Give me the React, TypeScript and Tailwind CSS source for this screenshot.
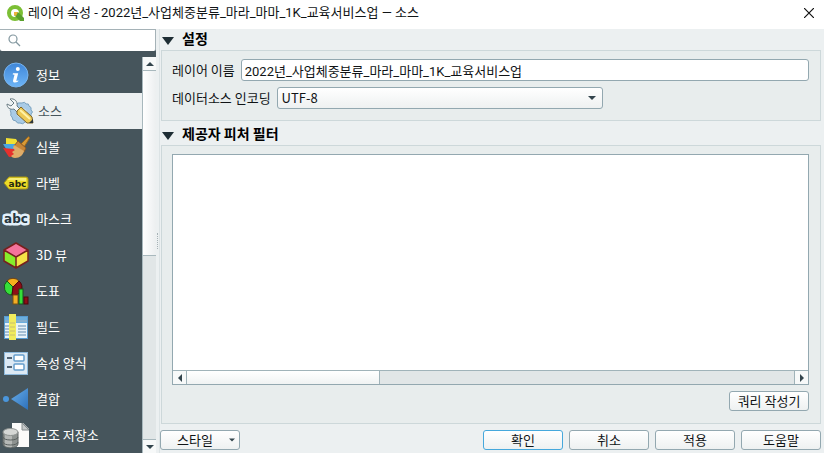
import { useState, type ReactNode } from "react";

const svgBox = "size-7 shrink-0";

const InfoIcon = () => (
  <svg viewBox="0 0 28 28" className={svgBox}>
    <defs>
      <linearGradient id="info" x1="0" y1="0" x2="0" y2="1">
        <stop offset="0" stopColor="#3f86d8" />
        <stop offset="1" stopColor="#6db5f7" />
      </linearGradient>
    </defs>
    <circle cx="14" cy="14" r="12" fill="url(#info)" stroke="#78b4ee" strokeWidth="1" />
    <circle cx="15.8" cy="8" r="2" fill="#fff" />
    <path d="M11 12.2h5.2l-1.8 7c-.2 1 .6.8 2 .1l-.3 1.2c-2.500 1.600-5.700 1.500-5-1.300l1.400-5.400-1.800-.4z" fill="#fff" />
  </svg>
);

const SourceIcon = () => (
  <svg viewBox="0 0 28 28" className={svgBox}>
    <path d="M16 6q3-2 4 1 3-1 3 2 3 1 2 4 3 2 0 4 1 4-2 5 0 3-4 3-2 3-5 1-3 1-4-2-4 0-4-4-2-1-1-4-2-3 1-5 0-3 4-3 1-3 6-2z" fill="#a9cbe6" stroke="#7ba3c0" strokeWidth="1" />
    <circle cx="16" cy="16" r="5" fill="#dcebf5" />
    <path d="M4 2c4-1 8 2 7 7l8 8-3 3L8 12c-4 1-7-1-7-5l4 2 3-3z" fill="#f4f6f6" stroke="#687b83" strokeWidth="1" />
    <path d="M11 14l4-4 11 10 1 6-6 0-10-9z" fill="#edca55" stroke="#7d6428" strokeWidth="1" />
    <path d="M14 13l10 9" stroke="#fff3a8" strokeWidth="2" />
    <path d="M23 26l4-4v4z" fill="#2e383c" />
  </svg>
);

const BrushIcon = () => (
  <svg viewBox="0 0 28 28" className={svgBox}>
    <path d="M4 5l10 1 3 5-5 5-8-4z" fill="#f0df33" />
    <path d="M1 11l12 0 3 6-10 2z" fill="#49a6e2" />
    <path d="M1 15l11 1 4 7-9 1z" fill="#e5302d" />
    <path d="M19 11l7-7c1-1 2 1 1 2l-5 8z" fill="#d89a37" stroke="#a06a1c" strokeWidth="1" />
    <path d="M16 8l8 7-2 4-10-6z" fill="#c78638" stroke="#8d5822" strokeWidth="1" />
    <path d="M12 12l10 6c-1 4-4 7-9 7-2 0-3-1-4-2l3-2-2-2 3-2-2-2z" fill="#dfac68" />
  </svg>
);

const LabelIcon = () => (
  <svg viewBox="0 0 28 28" className={svgBox}>
    <path d="M2 14l5-6h17q2 0 2 2v8q0 2-2 2H7z" fill="#eddb27" stroke="#a79718" strokeWidth="1" />
    <path d="M5 11l3-2h16v3z" fill="#f7ee77" />
    <text x="15.500" y="17.500" textAnchor="middle" fontFamily="DejaVu Sans" fontWeight="bold" fontSize="9" fill="#252810">abc</text>
  </svg>
);

const MaskIcon = () => (
  <svg viewBox="0 0 28 28" className={svgBox}>
    <text x="14" y="18" textAnchor="middle" fontFamily="DejaVu Sans" fontWeight="bold" fontSize="12" fill="#27363e" stroke="#e3f0fa" strokeWidth="5" strokeLinejoin="round" paintOrder="stroke">abc</text>
  </svg>
);

const CubeIcon = () => (
  <svg viewBox="0 0 28 28" className={svgBox}>
    <path d="M14 2l12 7-12 7L2 9z" fill="#f5739b" />
    <path d="M2 9l12 7v11L2 20z" fill="#86ed2b" />
    <path d="M26 9l-12 7v11l12-7z" fill="#f5e246" />
    <path d="M14 2l12 7v11l-12 7-12-7V9zM2 9l12 7 12-7M14 16v11" fill="none" stroke="#77201d" strokeWidth="1.500" strokeLinejoin="round" />
  </svg>
);

const ChartIcon = () => (
  <svg viewBox="0 0 28 28" className={svgBox}>
    <path d="M11 10L5 4a8 8 0 0 1 12 0z" fill="#f6b01d" stroke="#704313" strokeWidth="1" />
    <path d="M11 10L5 4a8 8 0 0 0 5 14z" fill="#35df39" stroke="#16551c" strokeWidth="1" />
    <path d="M11 10l6-6a8 8 0 0 1-7 14z" fill="#8e0d17" stroke="#49090c" strokeWidth="1" />
    <rect x="11" y="18" width="5" height="9" fill="#f3ad26" stroke="#795211" strokeWidth="1" />
    <rect x="17" y="12" width="4" height="15" fill="#35df39" stroke="#16551c" strokeWidth="1" />
    <rect x="22" y="20" width="4" height="7" fill="#8e0d17" stroke="#49090c" strokeWidth="1" />
  </svg>
);

const FieldIcon = () => (
  <svg viewBox="0 0 28 28" className={svgBox}>
    <rect x="2.500" y="3.500" width="23" height="22" fill="#e8f2f8" stroke="#579bd0" />
    <path d="M3 4h22v6H3z" fill="#6baedd" />
    <path d="M3 8h22M16 13h8M16 16h8M16 19h8M16 22h8M3 13h4M3 16h4M3 19h4M3 22h4" stroke="#8faec7" strokeWidth="1.500" />
    <rect x="7" y="1" width="7" height="26" fill="#f1ec5d" />
    <path d="M8 10h5M8 14h5M8 18h5M8 22h5" stroke="#d6ce69" strokeWidth="1.500" />
  </svg>
);

const FormIcon = () => (
  <svg viewBox="0 0 28 28" className={svgBox}>
    <rect x="2.500" y="3.500" width="23" height="22" fill="#dce9f4" stroke="#8db9dc" />
    <path d="M5 9h5M5 18h5" stroke="#536575" strokeWidth="2" />
    <rect x="12" y="6" width="10" height="6" rx="1" fill="#fff" stroke="#649dcc" strokeWidth="1.500" />
    <rect x="12" y="15" width="10" height="6" rx="1" fill="#fff" stroke="#649dcc" strokeWidth="1.500" />
  </svg>
);

const JoinIcon = () => (
  <svg viewBox="0 0 28 28" className={svgBox}>
    <defs>
      <linearGradient id="join" x1="0" y1="0" x2="1" y2="1">
        <stop offset="0" stopColor="#68aeea" />
        <stop offset="1" stopColor="#2d70ba" />
      </linearGradient>
    </defs>
    <circle cx="4" cy="14" r="3" fill="#4a96dc" />
    <path d="M9 14L26 3v22z" fill="url(#join)" />
  </svg>
);

const StorageIcon = () => (
  <svg viewBox="0 0 28 28" className={svgBox}>
    <path d="M10 2h11l6 6v18H10z" fill="#fbfbfa" />
    <path d="M20 2v7h7z" fill="#c5c9c9" stroke="#858c8d" strokeWidth="1" />
    <path d="M1 11v12c0 5 15 5 15 0V11z" fill="#8d9290" stroke="#5e6564" strokeWidth="1" />
    <path d="M3 13v12q4 2 7 1V14z" fill="#b5b8b6" />
    <ellipse cx="8.500" cy="11" rx="7.500" ry="3.500" fill="#d5d7d5" stroke="#8d9290" />
    <path d="M1 16c0 4 15 4 15 0M1 21c0 4 15 4 15 0" fill="none" stroke="#59605f" strokeWidth="1" />
  </svg>
);

const items: { label: string; icon: ReactNode }[] = [
  { label: "정보", icon: <InfoIcon /> },
  { label: "소스", icon: <SourceIcon /> },
  { label: "심볼", icon: <BrushIcon /> },
  { label: "라벨", icon: <LabelIcon /> },
  { label: "마스크", icon: <MaskIcon /> },
  { label: "3D 뷰", icon: <CubeIcon /> },
  { label: "도표", icon: <ChartIcon /> },
  { label: "필드", icon: <FieldIcon /> },
  { label: "속성 양식", icon: <FormIcon /> },
  { label: "결합", icon: <JoinIcon /> },
  { label: "보조 저장소", icon: <StorageIcon /> },
];

const arrows = {
  up: "M0 6l4-4 4 4z",
  down: "M0 2h8L4 6z",
  left: "M6 0v8L2 4z",
  right: "M2 0l4 4-4 4z",
};

function Arrow({ dir, className = "size-2" }: { dir: keyof typeof arrows; className?: string }) {
  return (
    <svg viewBox="0 0 8 8" className={className} fill="#33454d" aria-hidden="true">
      <path d={arrows[dir]} />
    </svg>
  );
}

function PushButton({ children, primary = false }: { children: ReactNode; primary?: boolean }) {
  return (
    <button
      type="button"
      className={`flex h-5 w-20 items-center justify-center rounded-[3px] border bg-linear-to-b from-white to-[#eef1f1] whitespace-nowrap ${
        primary ? "border-[#46a8dc]" : "border-[#93a8b0]"
      }`}
    >
      {children}
    </button>
  );
}

function Group({ title, className = "", children }: { title: string; className?: string; children: ReactNode }) {
  const [open, setOpen] = useState(true);
  return (
    <section className={`flex flex-col ${className}`}>
      <h2 className="flex h-[21px] items-center pb-[3px]">
        <button type="button" aria-expanded={open} onClick={() => setOpen(!open)} className="flex items-center gap-2 pl-px text-[14px] font-bold text-black">
          <svg viewBox="0 0 12 8" className="mt-1.5 h-2 w-3" fill="#1e2d34" aria-hidden="true">
            <path d="M0 0h12L6 8z" />
          </svg>
          {title}
        </button>
      </h2>
      {open && children}
    </section>
  );
}

export default function App() {
  const [selected, setSelected] = useState(1);
  return (
    <div className="flex min-h-screen flex-col bg-[#ecf0f1] font-['Noto_Sans_CJK_KR','Noto_Sans',sans-serif] text-[13px] leading-5 text-[#101416]">
      <header className="flex h-[29px] items-center bg-white pr-[7px] pb-1 pl-1.5">
        <svg viewBox="0 0 18 18" className="mr-1 size-[18px]" aria-hidden="true">
          <circle cx="9" cy="9" r="6" fill="none" stroke="#7cbf35" strokeWidth="4" />
          <path d="M8 8h4l6 6v3h-4l-6-6z" fill="#5aa02c" />
          <path d="M8 8h4l-2 4-2-1z" fill="#edb43c" />
        </svg>
        <h1 className="flex-1 font-[Roboto,'Noto_Sans_CJK_KR',sans-serif] whitespace-nowrap">레이어 속성 - 2022년_사업체중분류_마라_마마_1K_교육서비스업 — 소스</h1>
        <button type="button" aria-label="닫기" className="flex size-4 items-center justify-center">
          <svg viewBox="0 0 10 10" className="size-2.5" stroke="#111" strokeWidth="1.200">
            <path d="M0 0l10 10M10 0L0 10" />
          </svg>
        </button>
      </header>

      <div className="flex flex-1">
        <aside className="flex w-[156px] shrink-0 flex-col bg-[#46555c]">
          <label className="mb-1.5 flex h-[22px] items-center gap-1 rounded-b-xs border-t border-r border-[#a5b2b7] bg-white pl-2">
            <svg viewBox="0 0 14 14" className="size-3.5 shrink-0" fill="none" stroke="#82979f" strokeWidth="1.200" aria-hidden="true">
              <circle cx="5" cy="5" r="4" />
              <path d="M8 8l4 4" />
            </svg>
            <input type="search" aria-label="검색" className="w-full min-w-0 bg-transparent outline-none" />
          </label>
          <div className="flex flex-1">
            <nav className="flex-1">
              {items.map((item, i) => (
                <button
                  key={item.label}
                  type="button"
                  aria-current={i === selected ? "page" : undefined}
                  onClick={() => setSelected(i)}
                  className={`flex h-9 w-full items-center text-left whitespace-nowrap ${
                    i === selected ? "gap-1 bg-[#ecf0f1] pl-1.5 text-[#46555c]" : "gap-1.5 pl-0.5 text-white"
                  }`}
                >
                  {item.icon}
                  {item.label}
                </button>
              ))}
            </nav>
            <div className="flex w-3.5 flex-col border-l border-[#a8b8bd] bg-[#e1e6e7]">
              <button type="button" aria-label="위로" className="flex h-3.5 items-center justify-center border-b border-[#a8b8bd] bg-[#f7f9f9]">
                <Arrow dir="up" />
              </button>
              <div className="h-[185px] border-b border-[#a8b8bd] bg-linear-to-r from-white to-[#eceff0]" />
              <div className="flex-1" />
              <button type="button" aria-label="아래로" className="flex h-3.5 items-center justify-center border-t border-[#a8b8bd] bg-[#f7f9f9]">
                <Arrow dir="down" />
              </button>
            </div>
          </div>
        </aside>

        <div className="flex w-1 shrink-0 items-center justify-center border-r border-[#dce3e5]">
          <div className="h-4 border-l border-dotted border-[#a6b1b5]" />
        </div>

        <main className="flex min-w-0 flex-1 flex-col pr-[3px] pb-[3px]">
          <Group title="설정" className="pl-px">
            <div className="flex flex-col gap-1.5 border border-[#cdd8da] bg-[#e8eded] pt-2 pr-[11px] pb-[11px] pl-2.5">
              <div className="flex items-center gap-1.5">
                <label htmlFor="layer-name" className="whitespace-nowrap">레이어 이름</label>
                <input
                  id="layer-name"
                  defaultValue="2022년_사업체중분류_마라_마마_1K_교육서비스업"
                  className="h-[22px] min-w-0 flex-1 rounded-[3px] border border-[#93a8b0] bg-white px-[3px] font-[Roboto,'Noto_Sans_CJK_KR',sans-serif] outline-none"
                />
              </div>
              <div className="flex items-center gap-1.5">
                <label htmlFor="encoding" className="whitespace-nowrap">데이터소스 인코딩</label>
                <div className="relative w-[326px]">
                  <select
                    id="encoding"
                    className="block h-[22px] w-full appearance-none rounded-[3px] border border-[#93a8b0] bg-linear-to-b from-white to-[#eef1f1] px-1 leading-5 outline-none"
                  >
                    <option>UTF-8</option>
                  </select>
                  <Arrow dir="down" className="pointer-events-none absolute top-[7px] right-[7px] size-2" />
                </div>
              </div>
            </div>
          </Group>

          <Group title="제공자 피처 필터" className="mt-[3px] flex-1 pl-px">
            <div className="flex flex-1 flex-col items-end gap-1.5 border border-[#cdd8da] bg-[#e8eded] pt-2 pr-[11px] pb-3 pl-2.5">
              <div className="flex w-full flex-1 flex-col border border-[#93a8b0] bg-white">
                <textarea aria-label="제공자 피처 필터" className="w-full flex-1 resize-none outline-none" />
                <div className="flex h-3.5 border-t border-[#a0b3b9] bg-[#e1e6e7]">
                  <button type="button" aria-label="왼쪽" className="flex w-3.5 items-center justify-center border-r border-[#a0b3b9] bg-[#f7f9f9]">
                    <Arrow dir="left" />
                  </button>
                  <div className="w-[193px] border-r border-[#a0b3b9] bg-linear-to-b from-white to-[#f0f3f3]" />
                  <div className="flex-1" />
                  <button type="button" aria-label="오른쪽" className="flex w-3.5 items-center justify-center border-l border-[#a0b3b9] bg-[#f7f9f9]">
                    <Arrow dir="right" />
                  </button>
                </div>
              </div>
              <PushButton>쿼리 작성기</PushButton>
            </div>
          </Group>

          <footer className="mt-1.5 flex gap-1.5">
            <button
              type="button"
              className="mr-auto flex h-5 w-20 items-center justify-between rounded-[3px] border border-[#93a8b0] bg-linear-to-b from-white to-[#eef1f1] pr-1 pl-4"
            >
              스타일
              <Arrow dir="down" className="size-1.5" />
            </button>
            <PushButton primary>확인</PushButton>
            <PushButton>취소</PushButton>
            <PushButton>적용</PushButton>
            <PushButton>도움말</PushButton>
          </footer>
        </main>
      </div>
    </div>
  );
}
